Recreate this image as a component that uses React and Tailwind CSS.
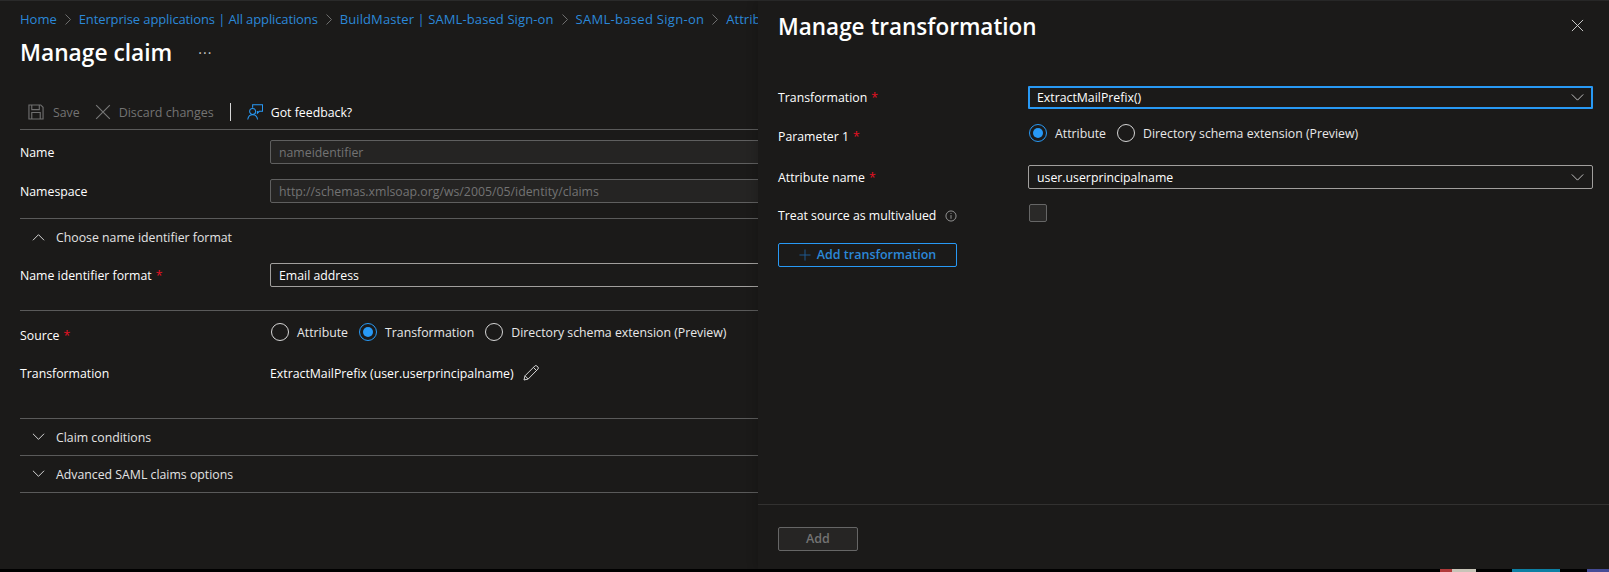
const font = { fontFamily: '"Open Sans", sans-serif' }

function Chevron({ up = false, className = '' }) {
  return (
    <svg width="13" height="8" viewBox="0 0 14 8" fill="none" stroke="currentColor" strokeWidth="1" className={className}>
      <path d={up ? 'M1 7.5 7 1.5l6 6' : 'M1 .5l6 6 6-6'} />
    </svg>
  )
}

function Caret() {
  return (
    <svg width="13" height="7" viewBox="0 0 14 8" fill="none" stroke="#d6d6d6" strokeWidth="1">
      <path d="M.5.5 7 7 13.5.5" />
    </svg>
  )
}

function Cross({ size = 14, color = '#d6d6d6' }) {
  return (
    <svg width={size} height={size} viewBox="0 0 14 14" fill="none" stroke={color} strokeWidth="1">
      <path d="M1 1l12 12M13 1 1 13" />
    </svg>
  )
}

function Radio({ on = false, label }) {
  return (
    <div className="flex items-center gap-2">
      <span className={`flex h-[18px] w-[18px] items-center justify-center rounded-full border ${on ? 'border-[#2899f5]' : 'border-[#d6d6d6]'}`}>
        {on && <span className="h-[10px] w-[10px] rounded-full bg-[#2899f5]" />}
      </span>
      <span className="pt-[2px] text-[12.3px] text-[#e8e8e8]">{label}</span>
    </div>
  )
}

function Label({ children, required = false, className = '' }) {
  return (
    <div className={`w-[250px] shrink-0 pt-[2px] text-[12.3px] text-white ${className}`}>
      {children}
      {required && <span className="ml-1 text-[#e81123]">*</span>}
    </div>
  )
}

function AccordionHead({ title, up = false, className = '' }) {
  return (
    <div className={`flex items-center text-[#e3e3e3] ${className}`}>
      <Chevron up={up} className="ml-3 mr-[11px]" />
      <span className="pt-[2px] text-[12.3px]">{title}</span>
    </div>
  )
}

function Hr() {
  return <div className="h-px w-full bg-[#5a5a5a]" />
}

function Crumb({ text, sep = true, className = '' }) {
  return (
    <>
      <span className={`text-[13px] text-[#2b88d8] ${className}`}>{text}</span>
      {sep && (
        <svg width="6" height="11" viewBox="0 0 6 11" fill="none" stroke="#6e6e6e" strokeWidth="1" className="mx-2 shrink-0">
          <path d="M.5.5 5.500 5.500.5 10.500" />
        </svg>
      )}
    </>
  )
}

function LeftBlade() {
  return (
    <div className="h-full w-[758px] shrink-0 overflow-hidden bg-[#1b1a19] pl-5">
      <div className="flex h-[37px] items-center whitespace-nowrap">
        <Crumb text="Home" />
        <Crumb text="Enterprise applications | All applications" className="tracking-[-0.12px]" />
        <Crumb text="BuildMaster | SAML-based Sign-on" className="tracking-[0.1px]" />
        <Crumb text="SAML-based Sign-on" className="tracking-[0.3px]" />
        <Crumb text="Attributes & Claims" sep={false} />
      </div>
      <div className="flex h-[30px] items-center">
        <h1 className="text-[22.75px] font-semibold text-white">Manage claim</h1>
        <span className="ml-[26px] pb-2 text-[14px] leading-none tracking-[1px] text-[#c8c8c8]">...</span>
      </div>

      <div className="mt-[27px] flex h-[34px] items-center text-[12.3px]">
        <svg width="16" height="16" viewBox="0 0 17 17" fill="none" stroke="#6f6f6f" strokeWidth="1.2" className="ml-2">
          <path d="M1 1h12.5L16 3.500V16H1zM4 1v5h8V1M4 16v-7h9v7" />
        </svg>
        <span className="ml-[9px] pt-[2px] text-[#737373]">Save</span>
        <span className="ml-[15px]"><Cross size={16} color="#777777" /></span>
        <span className="ml-2 pt-[2px] text-[12.5px] text-[#737373]">Discard changes</span>
        <span className="ml-4 h-[18px] w-px bg-[#d6d6d6]" />
        <svg width="16" height="16" viewBox="0 0 17 17" fill="none" stroke="#2899f5" strokeWidth="1.1" className="ml-[16px]">
          <path d="M6 4V.8h10.500v7H13l-2 2V7.500" />
          <circle cx="6" cy="8" r="3.200" />
          <path d="M.8 16.500c.4-3 2.400-5 5.200-5s4.800 2 5.200 5" />
        </svg>
        <span className="ml-2 pt-[2px] text-white">Got feedback?</span>
      </div>
      <Hr />

      <div className="mt-[10px] flex h-6 items-center">
        <Label>Name</Label>
        <div className="flex h-6 w-[600px] shrink-0 items-center rounded-[2px] border border-[#5f5f5f] bg-[#252423] px-2 pt-[2px] text-[12.3px] text-[#737373]">nameidentifier</div>
      </div>
      <div className="mt-[15px] flex h-6 items-center">
        <Label>Namespace</Label>
        <div className="flex h-6 w-[600px] shrink-0 items-center rounded-[2px] border border-[#5f5f5f] bg-[#252423] px-2 pt-[2px] text-[12.3px] text-[#737373]">http://schemas.xmlsoap.org/ws/2005/05/identity/claims</div>
      </div>
      <div className="mt-[15px]"><Hr /></div>

      <AccordionHead up title="Choose name identifier format" className="h-9" />
      <div className="mt-2 flex h-6 items-center">
        <Label required>Name identifier format</Label>
        <div className="flex h-6 w-[600px] shrink-0 items-center rounded-[2px] border border-[#a19f9d] px-2 pt-[2px] text-[12.3px] text-white">Email address</div>
      </div>
      <div className="mt-[23px]"><Hr /></div>

      <div className="mt-[12px] flex h-[18px] items-center">
        <Label required className="mt-[6px]">Source</Label>
        <div className="ml-px flex items-center gap-[11px]">
          <Radio label="Attribute" />
          <Radio on label="Transformation" />
          <Radio label="Directory schema extension (Preview)" />
        </div>
      </div>
      <div className="mt-[22px] flex h-[20px] items-center">
        <Label>Transformation</Label>
        <span className="pt-[2px] text-[12.3px] text-white">ExtractMailPrefix (user.userprincipalname)</span>
        <svg width="16" height="16" viewBox="0 0 16 16" fill="none" stroke="#d6d6d6" strokeWidth="1" className="ml-[9px]">
          <path d="M1 15l1-4.200L11.800 1a1.500 1.500 0 0 1 2.100 0l1 1a1.500 1.500 0 0 1 0 2.100L5.200 14zM10.500 2.500l3 3M2 10.800 5.200 14" />
        </svg>
      </div>
      <div className="mt-[35px]"><Hr /></div>
      <AccordionHead title="Claim conditions" className="h-9" />
      <Hr />
      <AccordionHead title="Advanced SAML claims options" className="h-9" />
      <Hr />
    </div>
  )
}

function RightBlade() {
  return (
    <div className="flex h-full flex-1 flex-col bg-[#1b1a19] shadow-[-4px_0_8px_rgba(0,0,0,0.12)]">
      <div className="flex h-[51px] items-center justify-between pl-5 pr-[25px]">
        <h2 className="text-[22.5px] font-semibold text-white">Manage transformation</h2>
        <span className="-mt-[3px]"><Cross size={13} /></span>
      </div>

      <div className="flex-1 pl-5 pr-4 pt-[34px]">
        <div className="flex h-[23px] items-center">
          <Label required>Transformation</Label>
          <div className="flex h-[23px] flex-1 items-center justify-between rounded-[1px] border-2 border-[#2899f5] pl-[7px] pr-[7px] text-[12.3px] text-white">
            <span className="pt-[2px]">ExtractMailPrefix()</span>
            <Caret />
          </div>
        </div>
        <div className="mt-[15px] flex h-[18px] items-center">
          <Label required className="mt-[6px]">Parameter 1</Label>
          <div className="ml-px flex items-center gap-[11px]">
            <Radio on label="Attribute" />
            <Radio label="Directory schema extension (Preview)" />
          </div>
        </div>
        <div className="mt-[23px] flex h-6 items-center">
          <Label required>Attribute name</Label>
          <div className="flex h-6 flex-1 items-center justify-between rounded-[2px] border border-[#a19f9d] pl-2 pr-2 text-[12.3px] text-white">
            <span className="pt-[2px]">user.userprincipalname</span>
            <Caret />
          </div>
        </div>
        <div className="mt-[15px] flex h-[18px] items-start">
          <div className="mt-[3px] flex w-[250px] shrink-0 items-center text-[12.3px] text-white">
            Treat source as multivalued
            <svg width="12" height="12" viewBox="0 0 13 13" fill="none" stroke="#9a9a9a" strokeWidth="1" className="ml-[9px]">
              <circle cx="6.500" cy="6.500" r="5.500" />
              <path d="M6.500 5.500v4M6.500 3.300v1" />
            </svg>
          </div>
          <span className="ml-px h-[18px] w-[18px] rounded-[2px] border border-[#666666] bg-[#2a2928]" />
        </div>
        <button className="mt-[21px] flex h-6 w-[179px] items-center justify-center gap-[6px] rounded-[2px] border border-[#2899f5] text-[12.5px] font-semibold text-[#2b88d8]">
          <svg width="12" height="12" viewBox="0 0 13 13" fill="none" stroke="#1f5d9a" strokeWidth="1">
            <path d="M6.500.5v12M.5 6.500h12" />
          </svg>
          Add transformation
        </button>
      </div>

      <div className="h-px bg-[#323130]" />
      <div className="h-[64px] pl-5 pt-5">
        <button className="h-6 w-20 rounded-[2px] border border-[#666666] bg-[#262524] text-[12.5px] font-semibold text-[#737373]">Add</button>
      </div>
    </div>
  )
}

export default function App() {
  return (
    <div className="flex h-[572px] w-[1609px] flex-col overflow-hidden bg-black" style={font}>
      <div className="flex h-[569px] border-t border-[#2a2a2a]">
        <LeftBlade />
        <RightBlade />
      </div>
      {/* sliver of the desktop under the window */}
      <div className="flex h-[3px]">
        <div className="w-[1440px]" />
        <div className="w-[12px] bg-[#b03a3a]" />
        <div className="w-[24px] bg-[#c8c4b8]" />
        <div className="w-[36px]" />
        <div className="w-[48px] bg-[#0d7fa3]" />
        <div className="w-[27px]" />
        <div className="w-[22px] bg-[#454b96]" />
      </div>
    </div>
  )
}
